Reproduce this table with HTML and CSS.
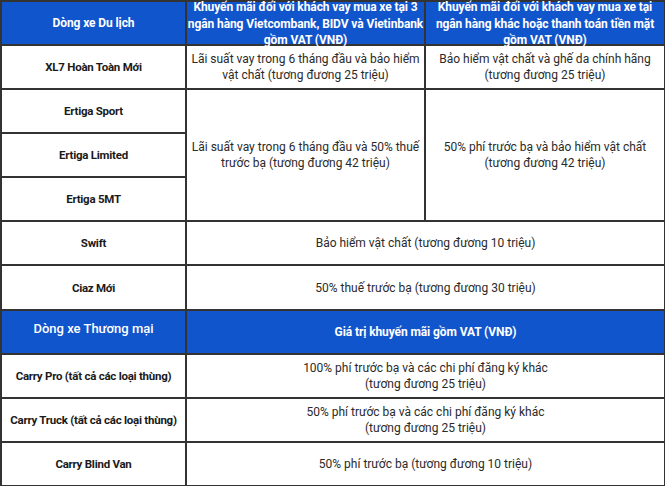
FILE: index.html
```html
<!DOCTYPE html>
<html lang="vi">
<head>
<meta charset="utf-8">
<title>Khuyến mãi</title>
<link rel="stylesheet" href="styles.css">
</head>
<body>
<table class="promo">
  <colgroup>
    <col class="c1"><col class="c2"><col class="c3">
  </colgroup>
  <tr class="head">
    <th>Dòng xe Du lịch</th>
    <th><div class="stack">Khuyến mãi đối với khách vay mua xe tại 3<br>ngân hàng Vietcombank, BIDV và Vietinbank<br>gồm VAT (VNĐ)</div></th>
    <th><div class="stack">Khuyến mãi đối với khách vay mua xe tại<br>ngân hàng khác hoặc thanh toán tiền mặt<br>gồm VAT (VNĐ)</div></th>
  </tr>
  <tr>
    <td class="model">XL7 Hoàn Toàn Mới</td>
    <td>Lãi suất vay trong 6 tháng đầu và bảo hiểm<br>vật chất (tương đương 25 triệu)</td>
    <td>Bảo hiểm vật chất và ghế da chính hãng<br>(tương đương 25 triệu)</td>
  </tr>
  <tr>
    <td class="model">Ertiga Sport</td>
    <td rowspan="3">Lãi suất vay trong 6 tháng đầu và 50% thuế<br>trước bạ (tương đương 42 triệu)</td>
    <td rowspan="3">50% phí trước bạ và bảo hiểm vật chất<br>(tương đương 42 triệu)</td>
  </tr>
  <tr>
    <td class="model">Ertiga Limited</td>
  </tr>
  <tr>
    <td class="model">Ertiga 5MT</td>
  </tr>
  <tr>
    <td class="model">Swift</td>
    <td colspan="2">Bảo hiểm vật chất (tương đương 10 triệu)</td>
  </tr>
  <tr class="tall">
    <td class="model">Ciaz Mới</td>
    <td colspan="2">50% thuế trước bạ (tương đương 30 triệu)</td>
  </tr>
  <tr class="head">
    <th class="big">Dòng xe Thương mại</th>
    <th colspan="2">Giá trị khuyến mãi gồm VAT (VNĐ)</th>
  </tr>
  <tr>
    <td class="model">Carry Pro (tất cả các loại thùng)</td>
    <td colspan="2">100% phí trước bạ và các chi phí đăng ký khác<br>(tương đương 25 triệu)</td>
  </tr>
  <tr>
    <td class="model">Carry Truck (tất cả các loại thùng)</td>
    <td colspan="2">50% phí trước bạ và các chi phí đăng ký khác<br>(tương đương 25 triệu)</td>
  </tr>
  <tr>
    <td class="model">Carry Blind Van</td>
    <td colspan="2">50% phí trước bạ (tương đương 10 triệu)</td>
  </tr>
</table>
</body>
</html>
```
FILE: styles.css
```css
html, body {
  margin: 0;
  padding: 0;
  background: #ffffff;
}
.promo {
  border-collapse: collapse;
  table-layout: fixed;
  width: 664px;
  font-family: Roboto, "Liberation Sans", sans-serif;
  font-size: 12px;
  line-height: 16px;
  color: #2a2a2a;
}
.c1 { width: 185px; }
.c2 { width: 239px; }
.c3 { width: 240px; }
.promo tr { height: 44px; }
.promo tr.tall { height: 45px; }
.promo th, .promo td {
  border: 2px solid #333333;
  padding: 0;
  text-align: center;
  vertical-align: middle;
  white-space: nowrap;
}
.head th {
  background: #1155cc;
  color: #ffffff;
  font-weight: 700;
  line-height: 16px;
  letter-spacing: -0.1px;
}
.stack {
  line-height: 16.5px;
  margin: -3px 0 -5px;
}
.head th.big {
  font-size: 13px;
  font-weight: 500;
  letter-spacing: 0;
  padding-bottom: 6px;
}
.model {
  font-size: 11.5px;
  font-weight: 700;
  color: #1a1a1a;
  letter-spacing: -0.25px;
}
```
